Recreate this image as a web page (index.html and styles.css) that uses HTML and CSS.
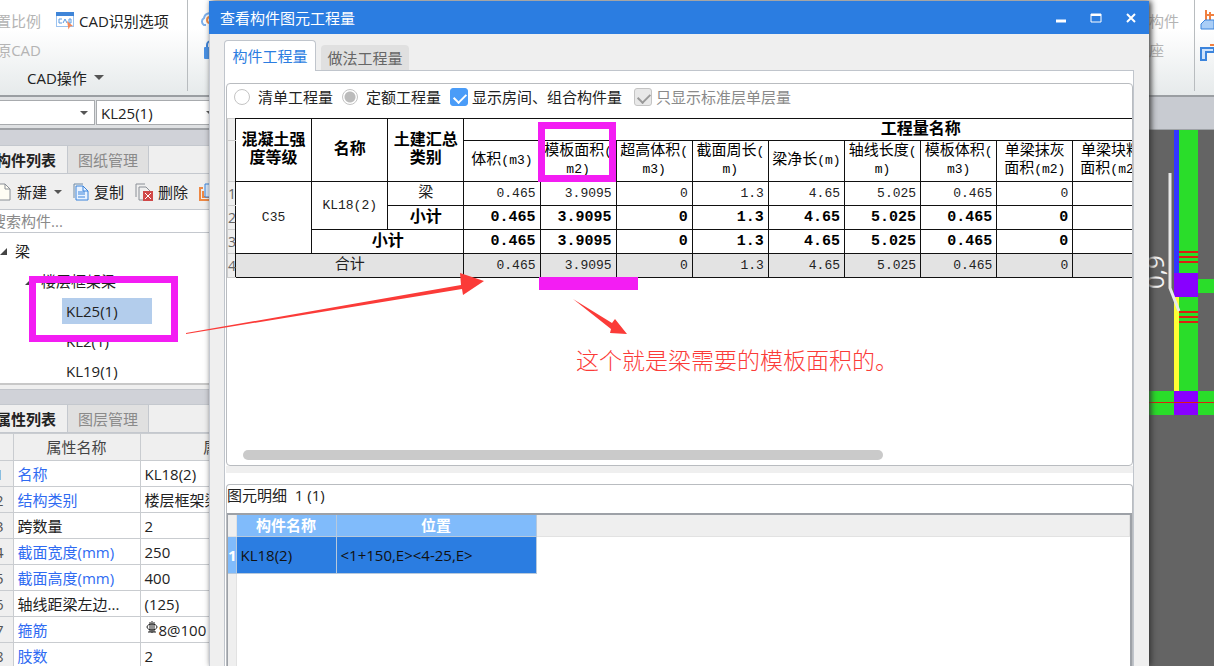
FILE: index.html
```html
<!DOCTYPE html>
<html lang="zh-CN">
<head>
<meta charset="utf-8">
<title>查看构件图元工程量</title>
<link rel="stylesheet" href="styles.css">
</head>
<body>
<div class="app">
  <aside class="side">
    <div class="ribbon">
      <div class="ribbon-main">
        <div class="ribbon-row">
          <button class="rb rb-off rb-scale" disabled>置比例</button>
          <button class="rb"><svg width="19" height="18" viewBox="0 0 19 18"><rect x=".5" y=".5" width="17" height="14" fill="#fff" stroke="#9cc3f0"/><path d="M0 0h18v4H0z" fill="#3f85d8"/><g fill="none" stroke="#5a9ae2"><path d="M6 7H3v4h3M7 11l2-4 2 4M13 7v4h2V7z"/></g><path d="M11 9l6 5-3 .5-1.500 3z" fill="#f28a5a"/></svg>CAD识别选项</button>
        </div>
        <div class="ribbon-row"><button class="rb rb-off rb-scale" disabled>原CAD</button></div>
        <div class="ribbon-title">CAD操作<i class="caret"></i></div>
      </div>
      <div class="ribbon-cut">
        <svg width="24" height="16" viewBox="0 0 24 16"><path d="M6 13H4a4 4 0 0 1 0-7 6 6 0 0 1 11-2" fill="none" stroke="#7db0ec" stroke-width="2"/><circle cx="10" cy="8" r="3" fill="none" stroke="#f09050" stroke-width="2"/></svg>
        <svg width="24" height="20" viewBox="0 0 24 20"><path d="M7 8V5a4 4 0 0 1 8 0v3" fill="none" stroke="#3b84dc" stroke-width="2"/><rect x="4" y="7" width="14" height="12" rx="1" fill="#4a92e6"/></svg>
      </div>
    </div>
    <div class="combos">
      <button class="combo combo-a" aria-label="楼层"><i class="caret small"></i></button>
      <button class="combo combo-b">KL25(1)<i class="caret small"></i></button>
    </div>
    <div class="strip"></div>
    <div class="tabs"><button class="tab on">构件列表</button><button class="tab">图纸管理</button></div>
    <div class="tools">
      <button class="tool"><svg width="16" height="18" viewBox="0 0 16 18"><path d="M1 1h8l5 5v11H1" fill="#fffdf4" stroke="#8a8f96"/><path d="M9 1v5h5" fill="none" stroke="#8a8f96"/><path d="M0 0h3v5H0z" fill="#f5b868"/></svg>新建<i class="caret small"></i></button>
      <button class="tool"><svg width="16" height="18" viewBox="0 0 16 18"><path d="M10 1H1v14" fill="none" stroke="#6d8aa8" stroke-width="1"/><path d="M3 3h7l5 5v9H3z" fill="#e8f2ff" stroke="#3b84dc"/><path d="M10 3v5h5M5 9h7M5 11h7M5 14h7" fill="none" stroke="#3b84dc"/></svg>复制</button>
      <button class="tool"><svg width="18" height="18" viewBox="0 0 18 18"><path d="M1 14V1h9M4 17V4h7l4 4M4 17h5" fill="none" stroke="#8a8f96"/><rect x="8" y="8" width="10" height="10" fill="#d04848"/><path d="M10 10l6 6M16 10l-6 6" stroke="#fff"/></svg>删除</button>
      <svg class="tool-cut" width="14" height="18" viewBox="0 0 14 18"><path d="M4 5H1v12h12M4 8v6h9" fill="none" stroke="#ee8844" stroke-width="2"/><path d="M6 1h8v13H6z" fill="#d9e9fb" stroke="#3b84dc"/></svg>
    </div>
    <input class="search" aria-label="搜索构件" placeholder="搜索构件...">
    <ul class="tree">
      <li class="lv0"><i class="tri"></i>梁</li>
      <li class="lv1"><i class="tri"></i>楼层框架梁</li>
      <li class="lv2"><span class="sel">KL25(1)</span></li>
      <li class="lv2">KL2(1)</li>
      <li class="lv2">KL19(1)</li>
    </ul>
    <div class="strip low"></div>
    <div class="tabs"><button class="tab on">属性列表</button><button class="tab">图层管理</button></div>
    <table class="props">
      <colgroup><col class="p0"><col class="p1"><col></colgroup>
      <thead><tr><th></th><th>属性名称</th><th>属性值</th></tr></thead>
      <tbody>
        <tr><th>1</th><td class="link">名称</td><td>KL18(2)</td></tr>
        <tr><th>2</th><td class="link">结构类别</td><td>楼层框架梁</td></tr>
        <tr><th>3</th><td>跨数量</td><td>2</td></tr>
        <tr><th>4</th><td class="link">截面宽度(mm)</td><td>250</td></tr>
        <tr><th>5</th><td class="link">截面高度(mm)</td><td>400</td></tr>
        <tr><th>6</th><td>轴线距梁左边...</td><td>(125)</td></tr>
        <tr><th>7</th><td class="link">箍筋</td><td><svg width="14" height="14" viewBox="0 0 14 14"><ellipse cx="7" cy="6" rx="5" ry="3" fill="none" stroke="#222"/><path d="M5 1v10M9 1v10M7 0v12M3 11h8" stroke="#222"/></svg>8@100</td></tr>
        <tr><th>8</th><td class="link">肢数</td><td>2</td></tr>
      </tbody>
    </table>
  </aside>

  <main class="dialog">
    <header class="bar"><h1>查看构件图元工程量</h1>
      <button aria-label="最小化"><svg width="12" height="12" viewBox="0 0 12 12"><path d="M1 9h10" stroke="#fff" stroke-width="3"/></svg></button>
      <button aria-label="最大化"><svg width="12" height="12" viewBox="0 0 12 12"><path d="M1 2h10v8H1z" fill="none" stroke="#fff"/><path d="M1 3h10" stroke="#fff" stroke-width="2"/></svg></button>
      <button aria-label="关闭"><svg width="12" height="12" viewBox="0 0 12 12"><path d="M2 2l8 8M10 2l-8 8" stroke="#fff" stroke-width="2"/></svg></button>
    </header>
    <div class="dtabs"><button class="dtab on">构件工程量</button><button class="dtab">做法工程量</button></div>
    <section class="pane">
      <div class="group">
        <div class="opts">
          <label><input type="radio" name="q">清单工程量</label>
          <label><input type="radio" name="q" checked>定额工程量</label>
          <label class="c1"><input type="checkbox" checked>显示房间、组合构件量</label>
          <label class="c2"><input type="checkbox" checked disabled>只显示标准层单层量</label>
        </div>
        <div class="scroll">
          <table class="qty">
            <colgroup><col class="q0"><col span="15"></colgroup>
            <thead>
              <tr class="h1"><td class="n"></td><th rowspan="2">混凝土强<br>度等级</th><th rowspan="2">名称</th><th rowspan="2">土建汇总<br>类别</th><th colspan="12" class="wide">工程量名称</th></tr>
              <tr class="h2"><td class="n"></td><th>体积<b>(m3)</b></th><th>模板面积<b>(</b><br><b>m2)</b></th><th>超高体积<b>(</b><br><b>m3)</b></th><th>截面周长<b>(</b><br><b>m)</b></th><th>梁净长<b>(m)</b></th><th>轴线长度<b>(</b><br><b>m)</b></th><th>模板体积<b>(</b><br><b>m3)</b></th><th>单梁抹灰<br>面积<b>(m2)</b></th><th>单梁块料<br>面积<b>(m2)</b></th><th colspan="3"></th></tr>
            </thead>
            <tbody>
              <tr><td class="n">1</td><td class="c" rowspan="3">C35</td><td class="c" rowspan="2">KL18(2)</td><td class="c cn">梁</td><td>0.465</td><td>3.9095</td><td>0</td><td>1.3</td><td>4.65</td><td>5.025</td><td>0.465</td><td>0</td><td></td><td colspan="3"></td></tr>
              <tr class="sub"><td class="n">2</td><td class="c cn">小计</td><td>0.465</td><td>3.9095</td><td>0</td><td>1.3</td><td>4.65</td><td>5.025</td><td>0.465</td><td>0</td><td></td><td colspan="3"></td></tr>
              <tr class="sub"><td class="n">3</td><td class="c cn" colspan="2">小计</td><td>0.465</td><td>3.9095</td><td>0</td><td>1.3</td><td>4.65</td><td>5.025</td><td>0.465</td><td>0</td><td></td><td colspan="3"></td></tr>
              <tr class="total"><td class="n">4</td><td class="c cn" colspan="3">合计</td><td>0.465</td><td>3.9095</td><td>0</td><td>1.3</td><td>4.65</td><td>5.025</td><td>0.465</td><td>0</td><td></td><td colspan="3"></td></tr>
            </tbody>
          </table>
        </div>
        <div class="hbar"><div class="thumb"></div></div>
      </div>
      <div class="split"></div>
      <div class="group detail">
        <div class="detail-title">图元明细&nbsp; 1 (1)</div>
        <div class="detail-box">
          <table class="elems">
            <colgroup><col class="e0"><col class="e1"><col class="e2"><col></colgroup>
            <thead><tr><th class="blank"></th><th>构件名称</th><th>位置</th><th class="blank"></th></tr></thead>
            <tbody><tr><th>1</th><td>KL18(2)</td><td>&lt;1+150,E&gt;&lt;4-25,E&gt;</td><td class="blank"></td></tr></tbody>
          </table>
          <div class="gutter"></div>
        </div>
      </div>
    </section>
  </main>

  <aside class="right">
    <div class="ribbon right-ribbon">
      <div class="right-btns"><button class="rb rb-off" disabled>构件</button><button class="rb rb-off" disabled>座</button></div>
      <div class="right-icons">
        <svg width="14" height="24" viewBox="0 0 14 24"><path d="M6 2v10M6 7h8M10 4v8" stroke="#f08040" stroke-width="2"/><path d="M1 21v-5l4-4h9v9z" fill="#a9cdf6" stroke="#3b84dc"/></svg>
        <svg width="14" height="24" viewBox="0 0 14 24"><path d="M1 20V8h13v4H6v8z" fill="#cfe3fb" stroke="#3b84dc" stroke-width="2"/><path d="M10 5h4" stroke="#f08040" stroke-width="2"/></svg>
      </div>
    </div>
    <div class="right-strip"></div>
    <svg class="cad" viewBox="0 0 65 536" preserveAspectRatio="xMinYMin slice">
      <path d="M30 0h19v261H30zM49 149h16v14H49zM0 261h65v24H0z" fill="#2add2a"/>
      <path d="M25 0h5v144h-5z" fill="#3434ff"/><path d="M25 167h5v94h-5z" fill="#ffff34"/>
      <path d="M25 143h24v24H25zM25 261h24v24H25z" fill="#8800ff"/>
      <path d="M30 122h19M30 127h19M30 132h19M30 182h19M30 187h19M30 192h19" stroke="#dc2010" stroke-width="2"/><path d="M0 272.500h65" stroke="#dc2010"/>
      <path d="M21 43v115l9 23" fill="none" stroke="#e8e8e8" stroke-width="3"/>
      <text transform="translate(15 159) rotate(-90)" class="dim">0,9</text>
    </svg>
  </aside>

  <div class="notes">
    <div class="mark mark-tree"></div>
    <div class="mark mark-col"></div>
    <div class="mark-line"></div>
    <svg class="arrows" width="460" height="80" viewBox="0 0 460 80"><g fill="#fb3b38"><path d="M6 62L281 14 280 2 304 10 283 24 282 18 6 63z"/><path d="M393 28L432 52 435 48 447 63 430 62 431 58z"/></g></svg>
    <p class="remark">这个就是梁需要的模板面积的。</p>
  </div>
</div>
</body>
</html>
```
FILE: styles.css
```css
* { box-sizing: border-box; }
body { margin: 0; font: 15px/20px "Open Sans", "Noto Sans CJK SC", sans-serif; color: #222; }
button { font: inherit; color: inherit; border: 0; padding: 0; background: none; white-space: nowrap; }
svg { flex: none; }
table { border-collapse: collapse; table-layout: fixed; }
.app { position: relative; display: flex; height: 100vh; overflow: hidden; }
.side { width: 209px; flex: none; overflow: hidden; background: #efefef; display: flex; flex-direction: column; }

.ribbon { display: flex; flex: none; height: 97px; background: linear-gradient(#fff 30%, #e6eaeb); border-bottom: 2px solid #9a9ea2; }
.ribbon-main { width: 188px; flex: none; margin-bottom: 4px; border-right: 1px solid #b8bcbf; padding-top: 6px; display: flex; flex-direction: column; }
.ribbon-row { display: flex; height: 29px; gap: 15px; }
.rb { display: flex; align-items: center; gap: 4px; height: 29px; }
.rb-off { color: #b4b4b4; }
.rb-scale { width: 41px; justify-content: flex-end; }
.ribbon-title { display: flex; align-items: center; height: 31px; padding-left: 27px; gap: 7px; }
.caret { border: 5px solid transparent; border-top-color: #555; border-bottom: 0; }
.caret.small { border-width: 4px; border-bottom: 0; }
.ribbon-cut { padding: 12px 0 0 12px; display: flex; flex-direction: column; gap: 12px; }

.combos { display: flex; flex: none; height: 33px; padding: 3px 0; background: #dfe1e3; border-bottom: 2px solid #9fa2a6; gap: 1px; }
.combo { display: flex; align-items: center; justify-content: flex-end; background: #fff; border: 1px solid #a8abae; padding-right: 6px; }
.combo-a { width: 95px; border-left: 0; flex: none; }
.combo-b { width: 122px; flex: none; justify-content: space-between; padding-left: 4px; padding-right: 3px; }
.strip { height: 15px; flex: none; background: #d0d2d8; }
.strip.low { margin-top: 4px; border-top: 1px solid #c2c5cb; }

.tabs { display: flex; flex: none; height: 29px; border-top: 1px solid #c4c8ce; border-bottom: 1px solid #c4c8ce; }
.tab { width: 81px; color: #8a8a8a; background: #e0e0e0; border: solid #c4c8ce; border-width: 0 1px 0 0; }
.tab.on { width: 68px; display: flex; align-items: center; justify-content: flex-end; padding-right: 11px; color: #222; font-weight: bold; background: #efefef; }
.tools { display: flex; flex: none; height: 35px; align-items: center; gap: 11px; margin-left: -4px; }
.tool { display: flex; align-items: center; gap: 5px; }
.tool .caret { margin-left: 2px; }
.search { height: 24px; flex: none; width: 229px; margin-left: -10px; padding: 0; border: 1px solid #c4c8ce; background: #fff; font: inherit; }
.search::placeholder { color: #8a8a8a; opacity: 1; }
.tree { list-style: none; margin: 0; padding: 3px 0 0; background: #fff; border-bottom: 2px solid #c8c8c8; height: 152px; flex: none; }
.tree li { display: flex; align-items: center; height: 30px; }
.lv0 { gap: 8px; }
.tree .lv1 { padding-left: 25px; gap: 9px; }
.tree .lv2 { padding-left: 66px; }
.tri { border: 7px solid transparent; border-width: 0 0 7px 7px; border-bottom-color: #444; }
.sel { background: #b3cdec; width: 90px; height: 26px; line-height: 26px; margin-left: -4px; padding-left: 4px; }

.props { width: 312px; background: #fff; }
.p0 { width: 13px; } .p1 { width: 127px; }
.props td, .props th { height: 26px; padding: 0 4px; border: 1px solid #c9ccd0; border-left: 0; line-height: 20px; text-align: left; white-space: nowrap; overflow: hidden; font-weight: normal; }
.props th { background: #efefef; }
.props thead th { height: 27px; text-align: center; color: #444; }
.props tbody th { text-indent: -9px; color: #555; }
.props .link { color: #2f6bf2; }
.props svg { vertical-align: 1px; }

.dialog { flex: 1; min-width: 0; margin-top: 1px; display: flex; flex-direction: column; background: #efefef; border-left: 1px solid #c4c8d0; box-shadow: 2px 0 6px #333; z-index: 1; }
.bar { display: flex; align-items: center; flex: none; height: 33px; padding: 0 12px 0 11px; margin-left: -1px; gap: 23px; background: #2b7de1; color: #fff; }
.bar h1 { flex: 1; margin: 0; font-size: 15px; font-weight: normal; }
.bar button { display: flex; }
.dtabs { display: flex; flex: none; height: 36px; align-items: flex-end; gap: 5px; padding: 5px 14px 0; }
.dtab { width: 88px; height: 25px; color: #666; background: #e0e0e0; border-radius: 4px 4px 0 0; }
.dtab.on { width: 92px; height: 31px; margin-bottom: -1px; color: #2b7de1; background: #fff; border: 1px solid #c0c5cc; border-bottom: 0; border-radius: 4px 4px 0 0; z-index: 1; }
.pane { flex: 1; min-height: 0; display: flex; flex-direction: column; margin: 0 15px 0 14px; padding: 12px 0 0 1px; background: #fff; border: 1px solid #c0c5cc; border-bottom: 0; }
.group { flex: none; height: 383px; border: 1px solid #b9bcc0; border-radius: 4px; display: flex; flex-direction: column; overflow: hidden; }
.opts { display: flex; align-items: center; flex: none; height: 34px; padding: 0 0 8px 7px; gap: 9px; }
.opts label { display: flex; align-items: center; gap: 8px; white-space: nowrap; }
.opts .c1, .opts .c2 { gap: 4px; }
.opts .c2 { color: #8a8a8a; margin-left: 3px; }
.opts input { appearance: none; margin: 0; width: 16px; height: 16px; border: 1px solid #c4c4c4; border-radius: 8px; background: #fff; }
.opts input[type=radio]:checked { background: radial-gradient(circle, #bbb 5px, #fff 6px); }
.opts input[type=checkbox] { position: relative; width: 18px; height: 18px; border-radius: 3px; }
.opts input[type=checkbox]::after { content: ""; position: absolute; left: 5px; top: 2px; width: 6px; height: 10px; border: solid #fff; border-width: 0 2px 2px 0; transform: rotate(45deg); }
.opts .c1 input { background: #4a9cf8; border-color: #4a9cf8; }
.opts .c2 input { background: #e8e8e8; }
.opts .c2 input::after { border-color: #999; }

.scroll { flex: 1; overflow: hidden; }
.qty { width: 1151px; font: 13px/18px "Liberation Mono", "Noto Sans CJK SC", monospace; color: #222; }
.q0 { width: 8px; }
.qty td, .qty th { padding: 0 4px 0 0; border: 1px solid #111; text-align: right; white-space: nowrap; height: 24px; }
.qty .h1 td, .qty .h1 .wide { height: 22px; }
.qty th { padding: 0; text-align: center; font-size: 16px; color: #000; }
.qty .h2 th { height: 41px; font-size: 15px; font-weight: normal; }
.qty b { font-size: 13px; font-weight: normal; }
.qty .c { padding: 0; text-align: center; }
.qty .cn { font-size: 15px; }
.qty .sub td { font-size: 15px; font-weight: bold; color: #000; }
.qty .sub .cn { font-size: 16px; }
.qty .total td { background: #e3e3e3; }
.qty td.n, .qty .sub td.n, .qty .total td.n { padding: 0; font: 14px/18px "Open Sans", sans-serif; color: #666; background: #efefef; border-color: #ccc; border-right-color: #111; }
.hbar { height: 15px; flex: none; padding-left: 16px; }
.thumb { width: 72%; height: 10px; border-radius: 5px; background: #cacaca; }
.split { height: 7px; margin-bottom: 11px; flex: none; background: #efefef; }
.detail { flex: 1; height: auto; border-bottom: 0; border-radius: 4px 4px 0 0; }
.detail-title { height: 28px; line-height: 21px; flex: none; color: #222; }
.detail-box { flex: 1; display: flex; flex-direction: column; border: solid #9da1a7; border-width: 2px 2px 0 1px; }
.elems { width: 100%; flex: none; }
.e0 { width: 8px; } .e1 { width: 100px; } .e2 { width: 200px; }
.elems th { height: 21px; padding: 0; background: #80bbfb; color: #fff; border: 1px solid #b7c9dc; border-width: 0 1px 1px 0; line-height: 20px; }
.elems td { height: 37px; padding: 0 4px; background: #2b7de1; color: #111; border: 1px solid #b7c9dc; border-width: 0 1px 1px 0; }
.elems th.blank { background: #efefef; border-color: #e2e2e2; }
.elems td.blank { background: #fff; border: 0; }
.gutter { flex: 1; width: 9px; background: #efefef; border-right: 1px solid #e2e2e2; }

.right { width: 65px; flex: none; display: flex; flex-direction: column; overflow: hidden; background: #646464; }
.right-btns { width: 46px; flex: none; margin-bottom: 4px; border-right: 1px solid #b8bcbf; padding-top: 6px; }
.right-icons { padding: 8px 0 0 5px; display: flex; flex-direction: column; gap: 8px; }
.right-strip { height: 33px; flex: none; background: #c8cbd1; border-bottom: 1px solid #9fa2a6; }
.cad { flex: 1; width: 100%; min-height: 0; }
.dim { font: 24px "Open Sans", sans-serif; fill: #f4f4f4; }

.notes { position: absolute; inset: 0; z-index: 2; pointer-events: none; }
.mark { position: absolute; border: 7px solid #f31df3; }
.mark-tree { left: 29px; top: 276px; width: 149px; height: 66px; }
.mark-col { left: 538px; top: 122px; width: 78px; height: 60px; }
.mark-line { position: absolute; left: 539px; top: 277px; width: 99px; height: 13px; background: #f31df3; }
.arrows { position: absolute; left: 180px; top: 271px; }
.remark { position: absolute; left: 576px; top: 344px; margin: 0; font: 300 23px/30px "Noto Sans CJK SC", sans-serif; color: #fb3b38; white-space: nowrap; }
```
